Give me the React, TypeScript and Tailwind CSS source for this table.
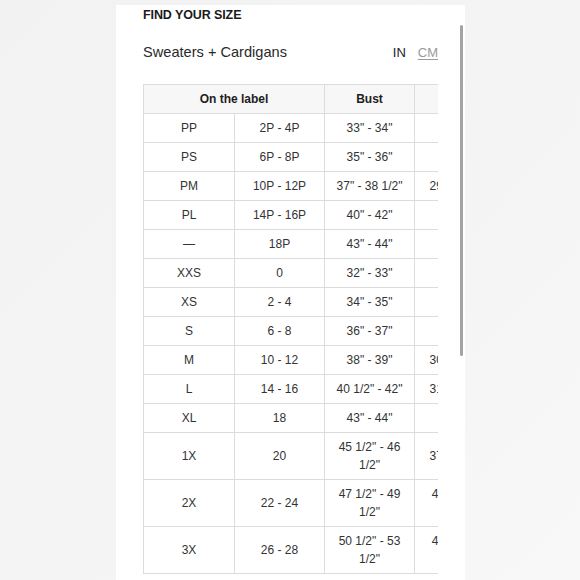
import React from "react";

type Row = { label: string; num: string; bust: string; waist: string; tall?: boolean };

const rows: Row[] = [
  { label: "PP", num: "2P - 4P", bust: "33\" - 34\"", waist: "26\" - 27\"" },
  { label: "PS", num: "6P - 8P", bust: "35\" - 36\"", waist: "28\" - 29\"" },
  { label: "PM", num: "10P - 12P", bust: "37\" - 38 1/2\"", waist: "29\" - 30 1/2\"" },
  { label: "PL", num: "14P - 16P", bust: "40\" - 42\"", waist: "32\" - 34\"" },
  { label: "—", num: "18P", bust: "43\" - 44\"", waist: "35\" - 36\"" },
  { label: "XXS", num: "0", bust: "32\" - 33\"", waist: "25\" - 26\"" },
  { label: "XS", num: "2 - 4", bust: "34\" - 35\"", waist: "27\" - 28\"" },
  { label: "S", num: "6 - 8", bust: "36\" - 37\"", waist: "29\" - 30\"" },
  { label: "M", num: "10 - 12", bust: "38\" - 39\"", waist: "30\" - 31 1/2\"" },
  { label: "L", num: "14 - 16", bust: "40 1/2\" - 42\"", waist: "31 1/2\" - 33\"" },
  { label: "XL", num: "18", bust: "43\" - 44\"", waist: "35\" - 36\"" },
  { label: "1X", num: "20", bust: "45 1/2\" - 46 1/2\"", waist: "37 1/2\" - 39\"", tall: true },
  { label: "2X", num: "22 - 24", bust: "47 1/2\" - 49 1/2\"", waist: "40 1/2\" - 42 1/2\"", tall: true },
  { label: "3X", num: "26 - 28", bust: "50 1/2\" - 53 1/2\"", waist: "43 1/2\" - 46 1/2\"", tall: true },
];

export default function App() {
  return (
    <div
      className="w-[580px] h-[580px] overflow-hidden bg-gradient-to-br from-[#f2f2f2] via-[#f4f4f5] to-[#f8f8f9] pt-[5px] pl-[116px]"
      style={{ fontFamily: '"Liberation Sans", Arial, sans-serif' }}
    >
      <div className="relative w-[349px] h-[575px] bg-white pl-[27px] pr-[27px] text-[#222]">
        <div className="absolute left-[344px] top-[20px] w-[3px] h-[331px] rounded-full bg-[#a3a3a3]" />
        <div className="pt-[3px] text-[12.5px] font-bold leading-[15px] tracking-[-0.1px] text-[#1a1a1a]">
          FIND YOUR SIZE
        </div>
        <div className="mt-[20px] flex items-center justify-between h-[20px]">
          <span className="text-[14.6px] text-[#2a2a2a]">Sweaters + Cardigans</span>
          <div className="flex items-center gap-[12px] text-[13px]">
            <span className="text-[#222]">IN</span>
            <span className="text-[#9a9a9a] underline underline-offset-[2px]">CM</span>
          </div>
        </div>
        <div className="mt-[21px] w-[295px] overflow-hidden">
          <table className="border-collapse text-[12px] leading-[18px] text-[#333] table-fixed w-[367px]">
            <colgroup>
              <col className="w-[91px]" />
              <col className="w-[90px]" />
              <col className="w-[90px]" />
              <col className="w-[96px]" />
            </colgroup>
            <thead>
              <tr className="bg-[#f7f7f7]">
                <th colSpan={2} className="border border-[#dcdcdc] h-[29px] py-[5px] font-bold text-[#1e1e1e]">
                  On the label
                </th>
                <th className="border border-[#dcdcdc] h-[29px] py-[5px] font-bold text-[#1e1e1e]">Bust</th>
                <th className="border border-[#dcdcdc] h-[29px] py-[5px] font-bold text-[#1e1e1e]">Waist</th>
              </tr>
            </thead>
            <tbody>
              {rows.map((r) => (
                <tr key={r.label}>
                  <td className={"border border-[#dcdcdc] text-center py-[5px] px-[8px] " + (r.tall ? "h-[46px]" : "h-[29px]")}>
                    {r.label}
                  </td>
                  <td className="border border-[#dcdcdc] text-center py-[5px] px-[8px]">{r.num}</td>
                  <td className="border border-[#dcdcdc] text-center py-[5px] px-[8px]">{r.bust}</td>
                  <td className="border border-[#dcdcdc] text-center py-[5px] px-[8px]">{r.waist}</td>
                </tr>
              ))}
            </tbody>
          </table>
        </div>
      </div>
    </div>
  );
}
